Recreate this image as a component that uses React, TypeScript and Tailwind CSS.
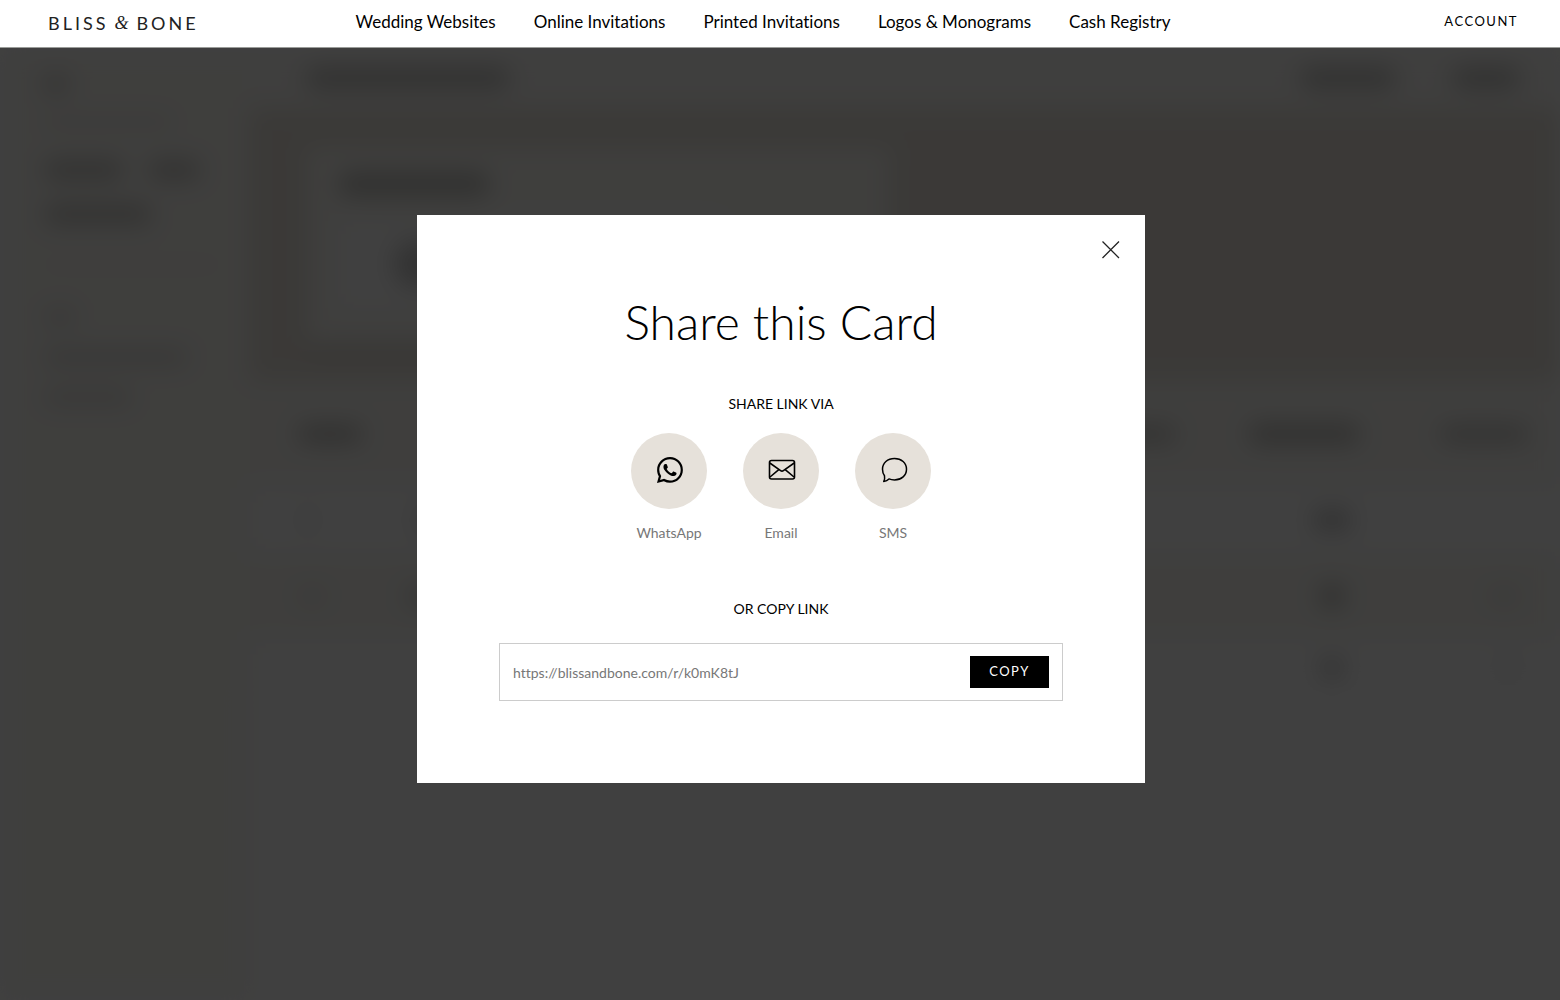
import { useState } from "react";
import { BsWhatsapp } from "react-icons/bs";

const navLinks = [
  "Wedding Websites",
  "Online Invitations",
  "Printed Invitations",
  "Logos & Monograms",
  "Cash Registry",
];

const shareUrl = "https://blissandbone.com/r/k0mK8tJ";

function EnvelopeIcon() {
  return (
    <svg viewBox="0 0 28 28" className="size-7" fill="none" stroke="currentColor" strokeWidth="1.6" strokeLinejoin="round">
      <rect x="1.5" y="4.5" width="25" height="18.5" rx="2" />
      <path d="M1.8 7 12.6 14.600Q14 15.800 15.400 14.600L26.200 7" />
      <path d="M2 21 10.800 13.600M26 21 17.200 13.600" />
    </svg>
  );
}

function BubbleIcon() {
  return (
    <svg viewBox="0 0 28 28" className="size-7" fill="none" stroke="currentColor" strokeWidth="1.500" strokeLinejoin="round">
      <path d="M14.500 2.500c7 0 12 4.600 12 10.700s-5 10.700-12 10.700c-2 0-3.900-.3-5.500-1-1.400 1.500-3.200 2.300-5.300 2.600.9-1.700 1.200-3.700.8-5.700-1.300-1.800-2-4.100-2-6.600 0-6.100 5-10.700 12-10.700Z" />
    </svg>
  );
}

function Bar({ className }: { className: string }) {
  return <div className={`rounded-full ${className}`} />;
}

function PageBehind() {
  return (
    <div aria-hidden="true" className="absolute inset-0 overflow-hidden bg-white">
      <div className="flex h-full blur-[12px]">
        <div className="flex w-[250px] shrink-0 flex-col bg-[#faf9f4] pl-11 pt-7">
          <Bar className="h-4 w-6 bg-[#c4c3bf]" />
          <Bar className="mt-6 h-3 w-32 bg-[#eae8e2]" />
          <div className="mt-8 flex gap-6">
            <Bar className="h-5 w-20 bg-[#c8c7c3]" />
            <Bar className="h-5 w-13 bg-[#c8c7c3]" />
          </div>
          <Bar className="mt-6 h-5 w-27 bg-[#c8c7c3]" />
          <div className="mt-10 h-px w-44 bg-[#e0deda]" />
          <Bar className="mt-11 h-4 w-8 bg-[#e0deda]" />
          <Bar className="mt-6 h-4 w-36 bg-[#dddbd6]" />
          <Bar className="mt-6 h-4 w-22 bg-[#e0deda]" />
        </div>
        <div className="flex flex-1 flex-col">
          <div className="flex h-[60px] items-center bg-[#faf9f6] pl-14 pr-10">
            <Bar className="h-5 w-51 bg-[#c0c0bd]" />
            <Bar className="ml-auto h-5 w-24 bg-[#c0c0bd]" />
            <Bar className="ml-14 h-5 w-17 bg-[#c0c0bd]" />
          </div>
          <div className="h-[272px] bg-[#e9e4dc] pl-14 pt-10">
            <div className="h-[196px] w-[584px] bg-[#faf9f4] px-8 pt-6 shadow-lg">
              <Bar className="h-6 w-38 bg-[#c0c0bc]" />
              <div className="mt-6 flex h-22 w-96 items-center bg-white pl-14">
                <Bar className="h-12 w-12 bg-[#c8c8c8]" />
              </div>
            </div>
          </div>
          <div className="flex h-[108px] items-center bg-[#f9f8f4] pl-12 pr-8">
            <Bar className="h-4 w-16 bg-[#b8b7b3]" />
            <Bar className="ml-auto h-4 w-16 bg-[#c4c3bf]" />
            <Bar className="ml-18 h-5 w-28 bg-[#c0bfbb]" />
            <Bar className="ml-20 h-4 w-22 bg-[#c4c3bf]" />
          </div>
          <div className="flex h-16 items-center bg-white pl-12 pr-52">
            <Bar className="h-4 w-5 bg-[#ececec]" />
            <Bar className="ml-24 h-4 w-12 bg-[#d4d4d4]" />
            <Bar className="ml-auto h-5 w-10 bg-[#c0c0c0]" />
          </div>
          <div className="flex h-[88px] items-center bg-[#f9f8f3] pl-12 pr-10">
            <Bar className="h-5 w-7 bg-[#ebe8e3]" />
            <Bar className="ml-20 h-5 w-12 bg-[#d4d3cf]" />
            <Bar className="ml-auto h-6 w-6 bg-[#b8b7b3]" />
            <Bar className="ml-36 h-5 w-8 bg-[#ebe8e3]" />
          </div>
          <div className="flex h-14 items-center bg-white pr-10">
            <Bar className="ml-auto h-5 w-6 bg-[#c0c0c0]" />
            <Bar className="ml-38 h-5 w-6 bg-[#f0f0f0]" />
          </div>
        </div>
      </div>
      <div className="absolute inset-0 bg-black/75" />
    </div>
  );
}

export default function App() {
  const [copied, setCopied] = useState(false);
  const copy = () => {
    navigator.clipboard?.writeText(shareUrl);
    setCopied(true);
  };
  const channels = [
    { label: "WhatsApp", icon: <BsWhatsapp className="size-[26px]" /> },
    { label: "Email", icon: <EnvelopeIcon /> },
    { label: "SMS", icon: <BubbleIcon /> },
  ];

  return (
    <div className="relative flex min-h-screen flex-col font-['Lato',sans-serif] text-black [font-variant-ligatures:none]">
      <header className="flex h-12 items-center justify-between border-b border-[#9a9c99] bg-white pb-1 pl-12 pr-[42px]">
        <a href="#home" className="flex w-[260px] items-center pt-1 text-[18px] tracking-[3px] text-[#222]">
          BLISS
          <span className="pl-1.5 pr-2 font-['Liberation_Serif',serif] italic tracking-normal">&amp;</span>
          BONE
        </a>
        <nav className="flex gap-[38px] text-[17px]">
          {navLinks.map((link) => (
            <a key={link} href="#nav">
              {link}
            </a>
          ))}
        </nav>
        <div className="flex w-[300px] justify-end">
          <a href="#account" className="text-[13px] tracking-[1.5px]">
            ACCOUNT
          </a>
        </div>
      </header>

      <main className="relative flex-1">
        <PageBehind />
      </main>

      <div className="absolute inset-0 flex items-center justify-center pb-0.5 pl-0.5">
        <section
          role="dialog"
          aria-modal="true"
          aria-labelledby="share-title"
          className="relative flex w-full max-w-[728px] flex-col items-center bg-white px-[82px] pb-[82px] pt-[79px]"
        >
          <button type="button" aria-label="Close" className="absolute right-6 top-[25px] flex size-5 items-center justify-center">
            <svg viewBox="0 0 20 20" className="size-5" stroke="#222" strokeWidth="1.3">
              <path d="M1.500 1.500 18 18M18 1.500 1.500 18" />
            </svg>
          </button>
          <h1 id="share-title" className="text-[48px] font-light leading-14">
            Share this Card
          </h1>
          <h2 className="mt-11 text-[14px] leading-5">SHARE LINK VIA</h2>
          <ul className="mt-[19px] flex gap-9">
            {channels.map(({ label, icon }) => (
              <li key={label}>
                <button type="button" className="flex w-[76px] flex-col items-center gap-3.5 text-[14px] leading-5 text-[#777]">
                  <span className="flex size-[76px] items-center justify-center rounded-full bg-[#e6e1da] pb-0.5 pl-0.5 text-black">
                    {icon}
                  </span>
                  {label}
                </button>
              </li>
            ))}
          </ul>
          <h2 className="mt-14 text-[14px] leading-5">
            <label htmlFor="share-link">OR COPY LINK</label>
          </h2>
          <div className="mt-6 flex h-[58px] w-full items-center border border-[#ccc] px-[13px]">
            <input
              id="share-link"
              readOnly
              value={shareUrl}
              className="min-w-0 flex-1 text-[14px] text-[#777] outline-none"
            />
            <button
              type="button"
              onClick={copy}
              aria-pressed={copied}
              className="h-8 w-[79px] bg-black text-[13px] tracking-[1.5px] text-white"
            >
              COPY
            </button>
          </div>
        </section>
      </div>
    </div>
  );
}
